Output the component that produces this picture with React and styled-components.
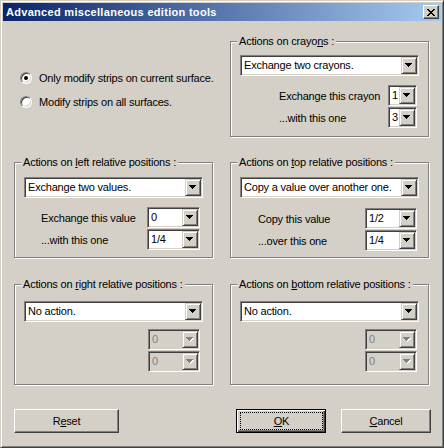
import React from 'react';
import styled, { createGlobalStyle, css } from 'styled-components';

const face = '#d4d0c8';

const GlobalStyle = createGlobalStyle`
  html, body {
    margin: 0;
    padding: 0;
    background: ${face};
  }
  body {
    font-family: "Liberation Sans", Arial, sans-serif;
    font-size: 11px;
    letter-spacing: -0.2px;
    color: #000;
  }
`;

const Window = styled.div`
  box-sizing: border-box;
  width: 444px;
  height: 448px;
  display: flex;
  flex-direction: column;
  padding: 2px;
  background: ${face};
  border: 1px solid;
  border-color: ${face} #404040 #404040 ${face};
  box-shadow: inset 1px 1px 0 #fff, inset -1px -1px 0 #808080;
`;

const TitleBar = styled.div`
  height: 18px;
  flex: none;
  display: flex;
  align-items: center;
  justify-content: space-between;
  padding: 0 2px 0 3px;
  background: linear-gradient(to right, #0a246a, #a6caf0);
  color: #fff;
  font-weight: bold;
  font-size: 11px;
  letter-spacing: 0.3px;
  line-height: 18px;
`;

const CloseButton = styled.span`
  box-sizing: border-box;
  width: 16px;
  height: 14px;
  display: flex;
  align-items: center;
  justify-content: center;
  background: ${face};
  border: 1px solid;
  border-color: #fff #404040 #404040 #fff;
  box-shadow: inset -1px -1px 0 #808080;
`;

const Content = styled.div`
  display: flex;
  flex-direction: column;
  padding: 14px 10px 0 11px;
`;

const Grid = styled.div`
  display: grid;
  grid-template-columns: 200px 200px;
  grid-template-rows: 102px 103px 107px;
  column-gap: 16px;
  row-gap: 19px;
  align-items: start;
`;

const RadioList = styled.div`
  display: flex;
  flex-direction: column;
  gap: 12px;
  padding: 37px 0 0 6px;
`;

const RadioRow = styled.label`
  display: flex;
  align-items: center;
  gap: 7px;
  height: 12px;
  line-height: 12px;
  white-space: nowrap;
`;

const RadioCircle = styled.span`
  box-sizing: border-box;
  flex: none;
  width: 12px;
  height: 12px;
  border-radius: 50%;
  display: flex;
  align-items: center;
  justify-content: center;
  background: #fff;
  border: 1px solid;
  border-color: #808080 #fff #fff #808080;
  box-shadow: inset 1px 1px 0 #404040, inset -1px -1px 0 ${face};

  ${p => p.$checked && css`
    &::after {
      content: '';
      width: 4px;
      height: 4px;
      border-radius: 50%;
      background: #000;
    }
  `}
`;

const Group = styled.fieldset`
  box-sizing: border-box;
  width: 199px;
  height: ${p => p.$h}px;
  margin: 0;
  min-inline-size: 0;
  padding: ${p => p.$pad}px 9px 0;
  border: 1px solid #808080;
  box-shadow: inset 1px 1px 0 #fff, 1px 1px 0 #fff;
`;

const Legend = styled.legend`
  margin-left: -3px;
  padding: 0 2px;
  line-height: 13px;
  background: ${face};
  white-space: nowrap;
`;

const Combo = styled.div`
  box-sizing: border-box;
  display: flex;
  width: ${p => (p.$w ? `${p.$w}px` : '100%')};
  height: 21px;
  padding: 1px;
  background: ${p => (p.$disabled ? face : '#fff')};
  border: 1px solid;
  border-color: #808080 #fff #fff #808080;
  box-shadow: inset 1px 1px 0 #404040, inset -1px -1px 0 ${face};
`;

const ComboText = styled.span`
  flex: 1;
  min-width: 0;
  padding-left: 2px;
  line-height: 17px;
  white-space: nowrap;
  overflow: hidden;
  color: ${p => (p.$disabled ? '#808080' : '#000')};
`;

const DropButton = styled.span`
  box-sizing: border-box;
  flex: none;
  width: 16px;
  height: 17px;
  display: flex;
  align-items: center;
  justify-content: center;
  background: ${face};
  border: 1px solid;
  border-color: ${face} #404040 #404040 ${face};
  box-shadow: inset 1px 1px 0 #fff, inset -1px -1px 0 #808080;
`;

const Params = styled.div`
  display: grid;
  grid-template-columns: 1fr ${p => p.$w}px;
  row-gap: 1px;
  align-items: center;
  margin-top: ${p => p.$gap}px;
  padding-left: ${p => p.$indent}px;
  padding-right: ${p => p.$right}px;
`;

const ParamLabel = styled.span`
  white-space: nowrap;
`;

const ButtonRow = styled.div`
  display: flex;
  align-items: center;
  gap: 15px;
  margin-top: 24px;
`;

const Spacer = styled.div`
  flex: 1;
`;

const Button = styled.button`
  box-sizing: border-box;
  display: inline-flex;
  align-items: stretch;
  width: ${p => p.$w}px;
  height: 24px;
  padding: 0;
  font: inherit;
  letter-spacing: inherit;
  color: #000;
  background: ${face};
  border: 1px solid;
  border-color: #fff #404040 #404040 #fff;
  box-shadow: inset -1px -1px 0 #808080;

  ${p => p.$default && css`
    border-color: #000;
    box-shadow: inset 1px 1px 0 #fff, inset -1px -1px 0 #404040, inset -2px -2px 0 #808080;
    padding: 2px 2px 2px 3px;
  `}
`;

const ButtonLabel = styled.span`
  flex: 1;
  display: flex;
  align-items: center;
  justify-content: center;
  ${p => p.$focus && css`
    border: 1px dotted #000;
  `}
`;

const ARROW = 'M0 0h7v1H0z M1 1h5v1H1z M2 2h3v1H2z M3 3h1v1H3z';
const CROSS = 'M0 0h2v1H0z M6 0h2v1H6z M1 1h2v1H1z M5 1h2v1H5z M2 2h4v1H2z M3 3h2v1H3z M2 4h4v1H2z M1 5h2v1H1z M5 5h2v1H5z M0 6h2v1H0z M6 6h2v1H6z';

const Arrow = ({ disabled }) => (
  <svg width="8" height="5" viewBox="0 0 8 5" shapeRendering="crispEdges">
    {disabled && <path d={ARROW} transform="translate(1 1)" fill="#fff" />}
    <path d={ARROW} fill={disabled ? '#808080' : '#000'} />
  </svg>
);

const Select = ({ value, w, disabled }) => (
  <Combo $w={w} $disabled={disabled}>
    <ComboText $disabled={disabled}>{value}</ComboText>
    <DropButton>
      <Arrow disabled={disabled} />
    </DropButton>
  </Combo>
);

const groups = [
  {
    legend: <>Actions on crayo<u>n</u>s :</>,
    value: 'Exchange two crayons.',
    rows: [['Exchange this crayon', '1'], ['...with this one', '3']],
    small: 29, indent: 39, right: 2, pad: 7, gap: 9, h: 102,
  },
  {
    legend: <>Actions on <u>l</u>eft relative positions :</>,
    value: 'Exchange two values.',
    rows: [['Exchange this value', '0'], ['...with this one', '1/4']],
    small: 53, indent: 17, right: 3, pad: 8, gap: 9, h: 102,
  },
  {
    legend: <>Actions on <u>t</u>op relative positions :</>,
    value: 'Copy a value over another one.',
    rows: [['Copy this value', '1/2'], ['...over this one', '1/4']],
    small: 52, indent: 18, right: 2, pad: 8, gap: 10, h: 102,
  },
  {
    legend: <>Actions on <u>r</u>ight relative positions :</>,
    value: 'No action.',
    rows: [['', '0'], ['', '0']],
    disabled: true,
    small: 52, indent: 0, right: 3, pad: 10, gap: 7, h: 107,
  },
  {
    legend: <>Actions on <u>b</u>ottom relative positions :</>,
    value: 'No action.',
    rows: [['', '0'], ['', '0']],
    disabled: true,
    small: 52, indent: 0, right: 2, pad: 10, gap: 7, h: 107,
  },
];

const ActionGroup = ({ g }) => (
  <Group $h={g.h} $pad={g.pad}>
    <Legend>{g.legend}</Legend>
    <Select value={g.value} />
    <Params $w={g.small} $gap={g.gap} $indent={g.indent} $right={g.right}>
      {g.rows.map(([label, val], i) => (
        <React.Fragment key={i}>
          <ParamLabel>{label}</ParamLabel>
          <Select value={val} w={g.small} disabled={g.disabled} />
        </React.Fragment>
      ))}
    </Params>
  </Group>
);

const App = () => (
  <>
    <GlobalStyle />
    <Window>
      <TitleBar>
        <span>Advanced miscellaneous edition tools</span>
        <CloseButton>
          <svg width="8" height="7" viewBox="0 0 8 7" shapeRendering="crispEdges">
            <path d={CROSS} fill="#000" />
          </svg>
        </CloseButton>
      </TitleBar>
      <Content>
        <Grid>
          <RadioList>
            <RadioRow>
              <RadioCircle $checked />
              Only modify strips on current surface.
            </RadioRow>
            <RadioRow>
              <RadioCircle />
              Modify strips on all surfaces.
            </RadioRow>
          </RadioList>
          {groups.map((g, i) => (
            <ActionGroup key={i} g={g} />
          ))}
        </Grid>
        <ButtonRow>
          <Button $w={105}>
            <ButtonLabel>R<u>e</u>set</ButtonLabel>
          </Button>
          <Spacer />
          <Button $w={90} $default>
            <ButtonLabel $focus><u>O</u>K</ButtonLabel>
          </Button>
          <Button $w={90}>
            <ButtonLabel><u>C</u>ancel</ButtonLabel>
          </Button>
        </ButtonRow>
      </Content>
    </Window>
  </>
);

export default App;
